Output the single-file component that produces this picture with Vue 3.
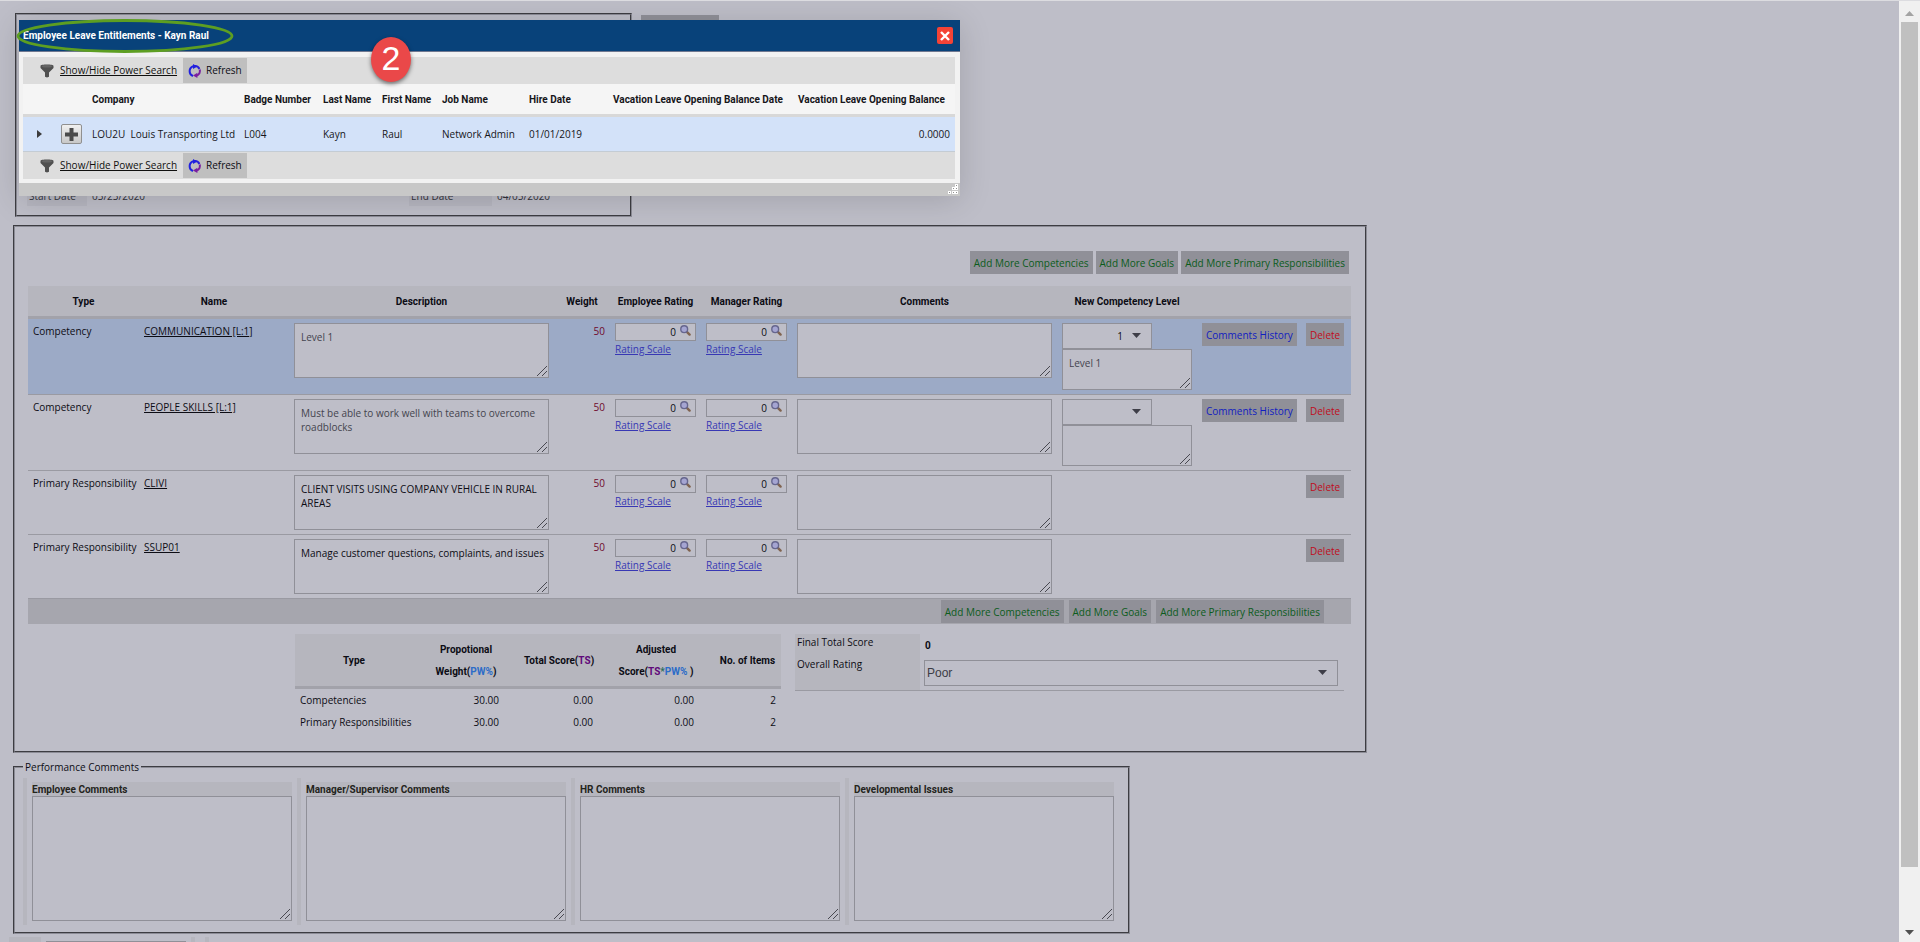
<script setup>
import { ref } from 'vue'

const items = ref([
  { type: 'Competency', name: 'COMMUNICATION [L:1]', text: 'Level 1', soft: true, level: '1', levelText: 'Level 1', history: true, active: true },
  { type: 'Competency', name: 'PEOPLE SKILLS [L:1]', text: 'Must be able to work well with teams to overcome roadblocks', soft: true, level: '', levelText: '', history: true },
  { type: 'Primary Responsibility', name: 'CLIVI', text: 'CLIENT VISITS USING COMPANY VEHICLE IN RURAL AREAS' },
  { type: 'Primary Responsibility', name: 'SSUP01', text: 'Manage customer questions, complaints, and issues' },
])
const addButtons = ['Add More Competencies', 'Add More Goals', 'Add More Primary Responsibilities']
const scores = [
  { type: 'Competencies', pw: '30.00', ts: '0.00', adj: '0.00', n: 2 },
  { type: 'Primary Responsibilities', pw: '30.00', ts: '0.00', adj: '0.00', n: 2 },
]
const commentBoxes = ['Employee Comments', 'Manager/Supervisor Comments', 'HR Comments', 'Developmental Issues']
const raters = ['Employee', 'Manager']
</script>

<template>
  <div class="screen">
    <main class="page">
      <div class="top-row">
        <fieldset class="panel period">
          <dl class="dates">
            <dt>Start Date</dt><dd>03/23/2020</dd>
            <dt>End Date</dt><dd>04/05/2020</dd>
          </dl>
        </fieldset>
        <div class="stub"></div>
      </div>

      <fieldset class="panel review">
        <div class="actions">
          <button v-for="b in addButtons" :key="b" type="button" class="btn green">{{ b }}</button>
        </div>
        <table class="grid">
          <colgroup>
            <col class="w-type"><col class="w-name"><col class="w-text"><col class="w-weight">
            <col class="w-rate"><col class="w-rate"><col class="w-text"><col class="w-level">
            <col class="w-hist"><col class="w-del">
          </colgroup>
          <thead>
            <tr>
              <th>Type</th><th>Name</th><th>Description</th><th>Weight</th><th>Employee Rating</th>
              <th>Manager Rating</th><th>Comments</th><th>New Competency Level</th><th></th><th></th>
            </tr>
          </thead>
          <tbody>
            <tr v-for="it in items" :key="it.name" :class="{ active: it.active }">
              <td class="txt">{{ it.type }}</td>
              <td class="txt"><a href="#" class="plain">{{ it.name }}</a></td>
              <td><textarea v-model="it.text" class="box mid" :class="{ soft: it.soft }" :aria-label="'Description ' + it.name"></textarea></td>
              <td class="txt weight">50</td>
              <td v-for="r in raters" :key="r">
                <div class="rating">
                  <input type="text" value="0" :aria-label="r + ' rating ' + it.name">
                  <button type="button" class="lens" aria-label="Look up">
                    <svg width="11" height="11" viewBox="0 0 11 11">
                      <path d="M6.6 6.6 9.6 9.6" stroke="#806450" stroke-width="2.4" stroke-linecap="round" />
                      <circle cx="4.2" cy="4.2" r="3.4" fill="#a5a5d2" stroke="#66668e" stroke-width="1.4" />
                    </svg>
                  </button>
                </div>
                <a href="#" class="scale">Rating Scale</a>
              </td>
              <td><textarea class="box mid" :aria-label="'Comments ' + it.name"></textarea></td>
              <td>
                <template v-if="it.history">
                  <div class="pick level">
                    <select v-model="it.level" :aria-label="'New level ' + it.name"><option value=""></option><option value="1">1</option></select>
                    <svg class="caret" width="9" height="5" viewBox="0 0 9 5"><path d="M0 0h9L4.500 5z" fill="#3e3e48" /></svg>
                  </div>
                  <textarea v-model="it.levelText" class="box small soft" :aria-label="'Level text ' + it.name"></textarea>
                </template>
              </td>
              <td><button v-if="it.history" type="button" class="btn blue">Comments History</button></td>
              <td><button type="button" class="btn red">Delete</button></td>
            </tr>
          </tbody>
        </table>
        <div class="foot">
          <button v-for="b in addButtons" :key="b" type="button" class="btn green">{{ b }}</button>
        </div>

        <div class="totals">
          <table class="scores">
            <colgroup><col class="s1"><col class="s2"><col class="s3"><col class="s4"><col class="s5"></colgroup>
            <thead>
              <tr>
                <th class="first">Type</th>
                <th>Propotional<br>Weight(<span class="pw">PW%</span>)</th>
                <th>Total Score(<span class="ts">TS</span>)</th>
                <th>Adjusted<br>Score(<span class="ts">TS</span><span class="star">*</span><span class="pw">PW% </span>)</th>
                <th>No. of Items</th>
              </tr>
            </thead>
            <tbody>
              <tr v-for="s in scores" :key="s.type">
                <td>{{ s.type }}</td><td>{{ s.pw }}</td><td>{{ s.ts }}</td><td>{{ s.adj }}</td><td>{{ s.n }}</td>
              </tr>
            </tbody>
          </table>
          <div class="final">
            <div class="labels"><span>Final Total Score</span><label for="overall">Overall Rating</label></div>
            <div class="values">
              <b>0</b>
              <div class="pick overall">
                <select id="overall"><option>Poor</option></select>
                <svg class="caret" width="9" height="5" viewBox="0 0 9 5"><path d="M0 0h9L4.500 5z" fill="#3e3e48" /></svg>
              </div>
            </div>
          </div>
        </div>
      </fieldset>

      <fieldset class="panel comments">
        <legend>Performance Comments</legend>
        <div class="boxes">
          <div v-for="(c, i) in commentBoxes" :key="c" class="cbox">
            <label :for="'c' + i">{{ c }}</label>
            <textarea :id="'c' + i" class="box tall"></textarea>
          </div>
        </div>
      </fieldset>

      <div class="next-row">
        <div class="nlabel"></div>
        <input type="text" class="ninput" aria-label="Next field">
        <div class="bar"></div>
        <div class="bar"></div>
      </div>
    </main>

    <div class="scrollbar">
      <svg width="9" height="5" viewBox="0 0 9 5"><path d="M0 5h9L4.500 0z" fill="#a3a3a3" /></svg>
      <div class="thumb"></div>
      <svg width="9" height="5" viewBox="0 0 9 5"><path d="M0 0h9L4.500 5z" fill="#505050" /></svg>
    </div>

    <section class="dialog" role="dialog" aria-labelledby="dlg-title">
      <header class="title">
        <h1 id="dlg-title">Employee Leave Entitlements - Kayn Raul</h1>
        <button type="button" class="close" aria-label="Close">
          <svg width="10" height="10" viewBox="0 0 10 10"><path d="M1 1l8 8M9 1l-8 8" stroke="#fff" stroke-width="2.400" /></svg>
        </button>
      </header>
      <div class="body">
        <template v-for="pos in ['top', 'bottom']" :key="pos">
          <div class="toolbar">
            <svg class="funnel" width="14" height="14" viewBox="0 0 14 14">
              <path d="M.5 2C.5.7 3.500.5 7 .5s6.500.2 6.500 1.500v2L9 8.500v4.200L7 13.500 5 12.700V8.500L.5 4z" fill="#505050" />
              <ellipse cx="7" cy="2.300" rx="5.200" ry="1.200" fill="#656565" />
            </svg>
            <a href="#" class="search">Show/Hide Power Search</a>
            <button type="button" class="refresh">
              <svg width="14" height="14" viewBox="0 0 14 14" fill="none" stroke-width="2">
                <path d="M5 12A5.200 5.200 0 0 1 5.200 2.200" stroke="#2020e0" />
                <path d="M6 2.200Q10 1.600 11.400 5" stroke="#2a20d8" />
                <path d="M5 0l4.400 2.400-4.400 2.600z" fill="#2020e0" />
                <path d="M11.800 5.500Q12.600 9.500 9 11.600" stroke="#7a1fa0" />
                <path d="M9.400 8.800l-4.400 2.600 4.400 2.600z" fill="#7a1fa0" />
              </svg>
              <span>Refresh</span>
            </button>
          </div>
          <table v-if="pos === 'top'" class="leave">
            <colgroup>
              <col class="l1"><col class="l2"><col class="l3"><col class="l4"><col class="l5"><col class="l6">
              <col class="l7"><col class="l8"><col class="l9"><col class="l10">
            </colgroup>
            <thead>
              <tr>
                <th></th><th></th><th>Company</th><th>Badge Number</th><th>Last Name</th><th>First Name</th><th>Job Name</th>
                <th>Hire Date</th><th>Vacation Leave Opening Balance Date</th><th>Vacation Leave Opening Balance</th>
              </tr>
            </thead>
            <tbody>
              <tr>
                <td><svg class="tri" width="5" height="8" viewBox="0 0 5 8"><path d="M0 0l5 4-5 4z" fill="#3c3c3c" /></svg></td>
                <td>
                  <button type="button" class="plus" aria-label="Add">
                    <svg width="13" height="13" viewBox="0 0 13 13"><path d="M6.500 0v13M0 6.500h13" stroke="#4a4a4a" stroke-width="4" /></svg>
                  </button>
                </td>
                <td>LOU2U&nbsp; Louis Transporting Ltd</td><td>L004</td><td>Kayn</td><td>Raul</td><td>Network Admin</td>
                <td>01/01/2019</td><td></td><td class="num">0.0000</td>
              </tr>
            </tbody>
          </table>
        </template>
      </div>
      <footer class="grip">
        <svg width="10" height="10" viewBox="0 0 10 10">
          <g fill="#fff"><path d="M7 0h3v3h-3zM4 3h3v3h-3zM7 3h3v3h-3zM0 7h3v3h-3zM4 7h3v3h-3zM7 7h3v3h-3z" /></g>
          <g fill="#909090"><path d="M8 1h1v1h-1zM5 4h1v1h-1zM8 4h1v1h-1zM1 8h1v1h-1zM5 8h1v1h-1zM8 8h1v1h-1z" /></g>
        </svg>
      </footer>
      <svg class="ring" width="218" height="36" viewBox="0 0 218 36"><ellipse cx="109" cy="18" rx="107" ry="15.500" fill="none" stroke="#5d9e22" stroke-width="2.800" /></svg>
      <div class="step">2</div>
    </section>
  </div>
</template>

<style>
body { margin: 0; overflow: hidden; }
</style>

<style scoped>
.screen {
  position: relative;
  display: grid;
  grid-template-columns: 1fr 21px;
  height: 100vh;
  overflow: hidden;
  box-sizing: border-box;
  border-top: 1px solid #dcdce0;
  background: #bebec8;
  color: #0c0c14;
  font: 10px/16px "Open Sans", "Noto Sans", sans-serif;
}
.screen *, .screen *::before { box-sizing: border-box; }
button, input, select, textarea { font: inherit; color: inherit; margin: 0; }
button { cursor: pointer; }
table { border-collapse: separate; border-spacing: 0; table-layout: fixed; }
th, td { padding: 0; }
th, b, h1, .cbox label { font-family: Roboto, sans-serif; font-weight: bold; }
.page { padding: 12px 13px 0; overflow: hidden; min-width: 0; }
.panel { margin: 0; padding: 0; border: 2px groove #8c8c96; min-width: 0; }

.top-row { display: flex; gap: 9px; padding-left: 2px; }
.period { width: 617px; height: 204px; display: flex; flex-direction: column; padding: 0 10px 10px; }
.dates { margin: 168px 0 0; display: grid; grid-template-columns: 60px 322px 83px 1fr; }
.dates dt { background: #b6b6c0; padding: 0 2px; height: 23px; line-height: 26px; color: #33333b; }
.dates dd { margin: 0; padding-left: 5px; line-height: 26px; color: #33333b; }
.stub { width: 78px; height: 23px; margin-top: 2px; background: #909098; }

.review { margin-top: 8px; max-width: 1354px; padding: 24px 14px 18px 13px; }
.actions { display: flex; justify-content: flex-end; gap: 3px; padding-right: 2px; }
.btn { height: 23px; padding: 1px 4px 0; border: 0; background: #909098; white-space: nowrap; line-height: 22px; }
.green { color: #0c5c1c; }
.blue { color: #1020c0; }
.red { color: #c00c1c; }

.grid { width: 100%; margin-top: 12px; }
.grid .w-type { width: 111px; } .grid .w-name { width: 150px; } .grid .w-text { width: 265px; }
.grid .w-weight { width: 56px; } .grid .w-rate { width: 91px; } .grid .w-level { width: 140px; }
.grid .w-hist { width: 104px; } .grid .w-del { width: 50px; }
.grid th { height: 33px; padding-top: 2px; background: #b6b6be; border-bottom: 3px solid #a2a2aa; white-space: nowrap; }
.grid td { padding: 4px 5px; vertical-align: top; border-bottom: 1px solid #9a9aa2; }
.grid .active { background: #9caac6; }
.grid .weight { text-align: right; color: #70082c; }
.grid .btn { display: block; }
.grid .txt { white-space: nowrap; }
.grid .plain { color: inherit; }
.box { display: block; width: 100%; border: 1px solid #909098; background: #bebec8; padding: 6px 2px 0 6px; line-height: 14px; outline: 0; border-radius: 0; overflow: hidden; }
.box::-webkit-resizer {
  background: url("data:image/svg+xml,%3Csvg xmlns='http://www.w3.org/2000/svg' width='15' height='15'%3E%3Cpath d='M4 14L14 4M9 14L14 9' stroke='%23484850'/%3E%3C/svg%3E") no-repeat right bottom;
}
.soft { color: #44444e; }
.mid { height: 55px; }
.small { height: 41px; width: 130px; }
.rating { display: flex; height: 18px; border: 1px solid #909098; background: #bebec8; }
.rating input { flex: 1; min-width: 0; border: 0; background: none; text-align: right; padding: 0 4px 0 0; }
.lens { border: 0; background: none; padding: 1px 3px 0 0; width: 15px; display: flex; align-items: flex-start; }
.scale { display: block; color: #3838b4; }
.pick { position: relative; border: 1px solid #909098; background: #bebec8; height: 26px; }
.pick select { appearance: none; width: 100%; height: 100%; border: 0; background: none; border-radius: 0; }
.pick .caret { position: absolute; right: 10px; top: 9px; pointer-events: none; }
.level { width: 90px; }
.level select { text-align: right; padding: 0 28px 0 4px; }

.foot { display: flex; justify-content: flex-end; gap: 5px; padding: 1px 27px 1px 0; background: #a6a6ae; }
.totals { display: grid; grid-template-columns: 486px 1fr; gap: 14px; padding: 10px 7px 0 267px; align-items: start; }
.scores { width: 100%; }
.s1 { width: 118px; } .s2 { width: 91px; } .s3 { width: 94px; } .s4 { width: 101px; } .s5 { width: 82px; }
.scores th { height: 55px; padding: 2px 5px 0 20px; line-height: 22px; background: #b6b6be; border-bottom: 3px solid #a2a2aa; white-space: nowrap; }
.scores th.first { padding: 2px 0 0; }
.scores td { height: 22px; padding: 0 5px; text-align: right; white-space: nowrap; }
.scores td:first-child { text-align: left; }
.pw { color: #2c6cc8; }
.ts { color: #60087a; }
.star { color: #2c6c5c; }
.final { display: grid; grid-template-columns: 125px 1fr; border-bottom: 1px solid #9a9aa2; height: 57px; }
.labels { background: #b6b6be; padding-left: 2px; display: flex; flex-direction: column; gap: 6px; }
.values { padding: 4px 6px 0 4px; display: flex; flex-direction: column; gap: 6px; }
.values b { padding-left: 1px; }
.overall select { font: 12px "Liberation Sans", Arial, sans-serif; color: #3c3c46; padding: 0 2px; }

.comments { margin-top: 7px; max-width: 1117px; padding: 0 9px 7px 8px; }
.comments legend { margin: 0; padding: 0 2px; line-height: 14px; }
.boxes { display: grid; grid-template-columns: repeat(4, 1fr); margin-top: 4px; }
.cbox { border-left: 4px solid #b6b6be; padding: 4px 5px 4px 5px; }
.cbox label { display: block; background: #b6b6be; padding-top: 2px; line-height: 12px; color: #24241c; }
.tall { height: 125px; }

.next-row { display: flex; gap: 5px; margin: 3px 0 0 -4px; height: 30px; }
.nlabel { width: 32px; background: #b6b6be; }
.ninput { width: 140px; margin-top: 4px; border: 1px solid #909098; background: #bebec8; }
.bar { width: 4px; margin-right: 5px; background: #b6b6be; }

.scrollbar { background: #f0f0f0; display: flex; flex-direction: column; align-items: center; padding: 10px 2px 7px; }
.thumb { flex: 1; width: 100%; background: #c0c0c0; margin: 6px 0 63px; }

.dialog { position: absolute; left: 19px; top: 19px; width: 941px; background: #f2f2f2; box-shadow: 0 4px 30px rgba(0, 0, 0, 0.15); }
.title { display: flex; align-items: center; justify-content: space-between; height: 32px; padding: 0 7px 0 4px; background: #08427a; border-bottom: 1px solid #707890; }
.title h1 { margin: 0; font-size: 10px; line-height: 16px; color: #fff; }
.close { width: 16px; height: 17px; padding: 0; border: 0; border-radius: 2px; background: #f44336; display: grid; place-items: center; }
.body { padding: 5px 5px 4px 4px; }
.toolbar { display: flex; align-items: center; height: 27px; padding-left: 17px; background: #dddddd; }
.search { margin-left: 6px; width: 123px; padding-bottom: 2px; color: #10100f; white-space: nowrap; }
.refresh { display: flex; align-items: center; gap: 4px; height: 25px; padding: 0 5px; border: 0; background: #bfbfbf; }
.refresh span { padding-bottom: 2px; }
.leave { width: 100%; color: #16161a; }
.l1 { width: 33px; } .l2 { width: 31px; } .l3 { width: 152px; } .l4 { width: 79px; } .l5 { width: 59px; }
.l6 { width: 60px; } .l7 { width: 87px; } .l8 { width: 84px; } .l9 { width: 185px; } .l10 { width: 162px; }
.leave th { height: 33px; padding: 2px 5px 0; text-align: left; background: #f5f5f5; border-bottom: 3px solid #d8d8d8; white-space: nowrap; }
.leave td { height: 35px; padding: 0 5px; background: #d3e2f9; border-bottom: 1px solid #c4ccd4; white-space: nowrap; }
.leave .num { text-align: right; }
.tri { display: block; margin-left: 9px; }
.plus { width: 21px; height: 20px; padding: 0; display: grid; place-items: center; border: 1px solid #909090; border-radius: 2px; background: linear-gradient(#f0f0f0, #c8c8c8); }
.grip { height: 13px; background: #c8c8c8; display: flex; justify-content: flex-end; padding: 1px 2px; }
.ring { position: absolute; left: -3px; top: -2px; }
.step { position: absolute; left: 352px; top: 17px; width: 40px; height: 45px; border-radius: 50%; background: #ea4849; color: #fff; font: 34px/43px "Liberation Sans", Arial, sans-serif; text-align: center; box-shadow: 0 2px 4px rgba(0, 0, 0, 0.5); }
</style>
